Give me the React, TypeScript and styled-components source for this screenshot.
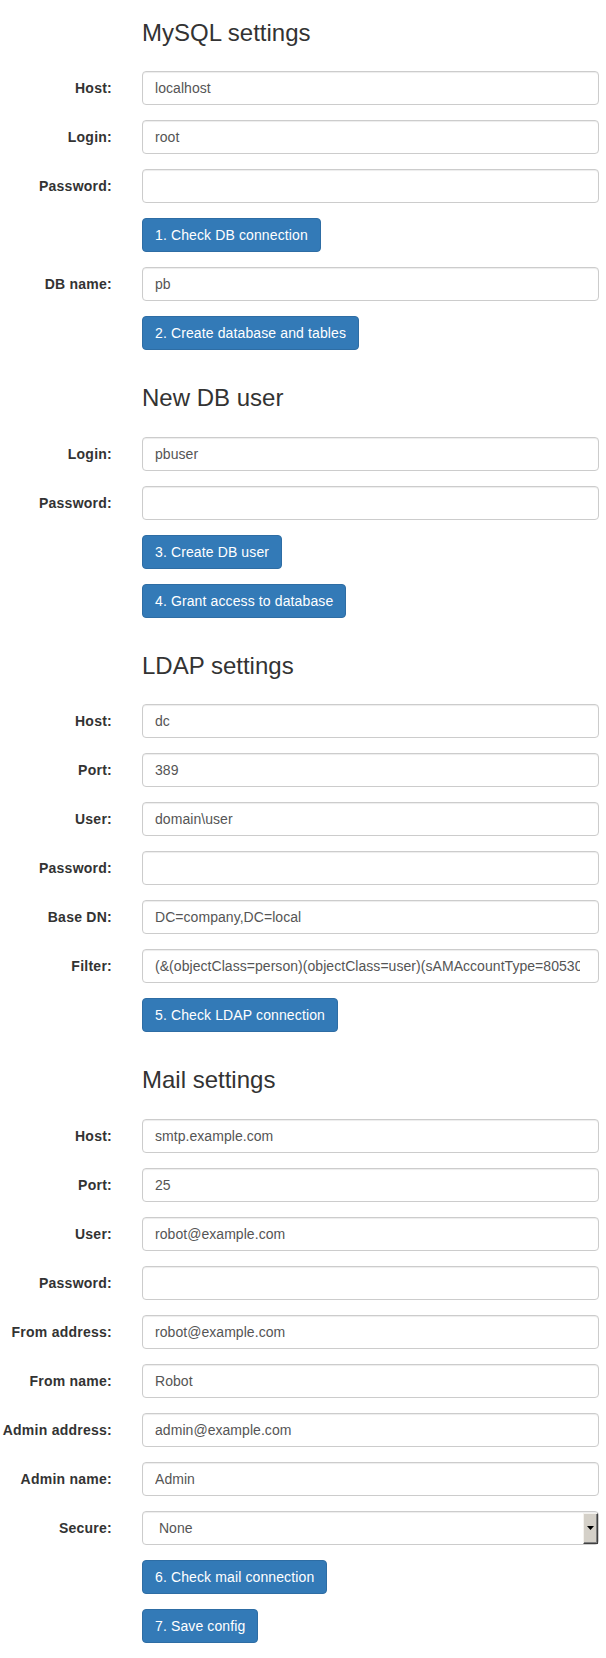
import React from "react";
import styled, { createGlobalStyle } from "styled-components";

const GlobalStyle = createGlobalStyle`
  html, body {
    margin: 0;
    padding: 0;
    background: #fff;
  }
  body {
    font-family: "Liberation Sans", Arial, Helvetica, sans-serif;
    font-size: 14px;
    line-height: 1.42857143;
    color: #333;
  }
  * { box-sizing: border-box; }
`;

const Form = styled.form`
  display: block;
  width: 606px;
  padding-right: 7px;
`;

const FormGroup = styled.div`
  display: grid;
  grid-template-columns: 112px 1fr;
  column-gap: 30px;
  margin-bottom: 15px;
`;

const Label = styled.label`
  display: block;
  padding-top: 7px;
  text-align: right;
  font-weight: 700;
  line-height: 20px;
  letter-spacing: 0.25px;
  color: #333;
  white-space: nowrap;
`;

const Field = styled.div`
  grid-column: 2;
  min-width: 0;
  position: relative;
`;

const Heading = styled.h3`
  grid-column: 2;
  margin: 20px 0 10px;
  font-size: 24px;
  font-weight: 500;
  line-height: 1.1;
  color: #333;
`;

const Input = styled.input<{ $padRight?: number }>`
  display: block;
  width: 100%;
  height: 34px;
  padding: 6px ${(p) => p.$padRight ?? 12}px 6px 12px;
  font-family: inherit;
  font-size: 14px;
  line-height: 1.42857143;
  letter-spacing: 0.05px;
  color: #555;
  background: #fff;
  border: 1px solid #ccc;
  border-radius: 4px;
  box-shadow: inset 0 1px 1px rgba(0, 0, 0, 0.075);
  outline: none;
`;

const Select = styled.select`
  display: block;
  width: 100%;
  height: 34px;
  padding: 6px 20px 6px 16px;
  font-family: inherit;
  font-size: 14px;
  line-height: 1.42857143;
  color: #555;
  background: #fff;
  border: 1px solid #ccc;
  border-radius: 4px;
  box-shadow: inset 0 1px 1px rgba(0, 0, 0, 0.075);
  appearance: none;
  -webkit-appearance: none;
  outline: none;
`;

const ArrowBox = styled.span`
  position: absolute;
  top: 2px;
  bottom: 1px;
  right: 1px;
  width: 15px;
  background: #d4d0c8;
  border-top: 1px solid #f4f2ee;
  border-left: 1px solid #f4f2ee;
  border-right: 1px solid #404040;
  border-bottom: 1px solid #404040;
  box-shadow: inset -1px -1px 0 #808080;
  display: flex;
  align-items: center;
  justify-content: center;
  pointer-events: none;
`;

const Button = styled.button`
  display: inline-block;
  padding: 6px 12px;
  margin: 0;
  font-family: inherit;
  font-size: 14px;
  font-weight: 400;
  line-height: 1.42857143;
  letter-spacing: 0.12px;
  color: #fff;
  background-color: #337ab7;
  border: 1px solid #2e6da4;
  border-radius: 4px;
  white-space: nowrap;
  cursor: pointer;
`;

type Row =
  | { kind: "input"; label: string; value?: string; password?: boolean; padRight?: number }
  | { kind: "button"; text: string }
  | { kind: "select"; label: string; options: string[] };

type Section = { title: string; rows: Row[] };

const sections: Section[] = [
  {
    title: "MySQL settings",
    rows: [
      { kind: "input", label: "Host:", value: "localhost" },
      { kind: "input", label: "Login:", value: "root" },
      { kind: "input", label: "Password:", password: true },
      { kind: "button", text: "1. Check DB connection" },
      { kind: "input", label: "DB name:", value: "pb" },
      { kind: "button", text: "2. Create database and tables" },
    ],
  },
  {
    title: "New DB user",
    rows: [
      { kind: "input", label: "Login:", value: "pbuser" },
      { kind: "input", label: "Password:", password: true },
      { kind: "button", text: "3. Create DB user" },
      { kind: "button", text: "4. Grant access to database" },
    ],
  },
  {
    title: "LDAP settings",
    rows: [
      { kind: "input", label: "Host:", value: "dc" },
      { kind: "input", label: "Port:", value: "389" },
      { kind: "input", label: "User:", value: "domain\\user" },
      { kind: "input", label: "Password:", password: true },
      { kind: "input", label: "Base DN:", value: "DC=company,DC=local" },
      {
        kind: "input",
        label: "Filter:",
        value: "(&(objectClass=person)(objectClass=user)(sAMAccountType=805306368))",
        padRight: 18,
      },
      { kind: "button", text: "5. Check LDAP connection" },
    ],
  },
  {
    title: "Mail settings",
    rows: [
      { kind: "input", label: "Host:", value: "smtp.example.com" },
      { kind: "input", label: "Port:", value: "25" },
      { kind: "input", label: "User:", value: "robot@example.com" },
      { kind: "input", label: "Password:", password: true },
      { kind: "input", label: "From address:", value: "robot@example.com" },
      { kind: "input", label: "From name:", value: "Robot" },
      { kind: "input", label: "Admin address:", value: "admin@example.com" },
      { kind: "input", label: "Admin name:", value: "Admin" },
      { kind: "select", label: "Secure:", options: ["None", "SSL", "TLS"] },
      { kind: "button", text: "6. Check mail connection" },
      { kind: "button", text: "7. Save config" },
    ],
  },
];

function renderRow(row: Row, key: string) {
  if (row.kind === "button") {
    return (
      <FormGroup key={key}>
        <Field>
          <Button type="button">{row.text}</Button>
        </Field>
      </FormGroup>
    );
  }
  if (row.kind === "select") {
    return (
      <FormGroup key={key}>
        <Label>{row.label}</Label>
        <Field>
          <Select defaultValue={row.options[0]}>
            {row.options.map((o) => (
              <option key={o}>{o}</option>
            ))}
          </Select>
          <ArrowBox>
            <svg width="7" height="4" viewBox="0 0 7 4">
              <polygon points="0,0 7,0 3.5,4" fill="#000" />
            </svg>
          </ArrowBox>
        </Field>
      </FormGroup>
    );
  }
  return (
    <FormGroup key={key}>
      <Label>{row.label}</Label>
      <Field>
        <Input
          type={row.password ? "password" : "text"}
          defaultValue={row.value ?? ""}
          $padRight={row.padRight}
        />
      </Field>
    </FormGroup>
  );
}

export default function App() {
  return (
    <>
      <GlobalStyle />
      <Form onSubmit={(e) => e.preventDefault()}>
        {sections.map((s, si) => (
          <React.Fragment key={s.title}>
            <FormGroup>
              <Heading>{s.title}</Heading>
            </FormGroup>
            {s.rows.map((r, ri) => renderRow(r, `${si}-${ri}`))}
          </React.Fragment>
        ))}
      </Form>
    </>
  );
}
